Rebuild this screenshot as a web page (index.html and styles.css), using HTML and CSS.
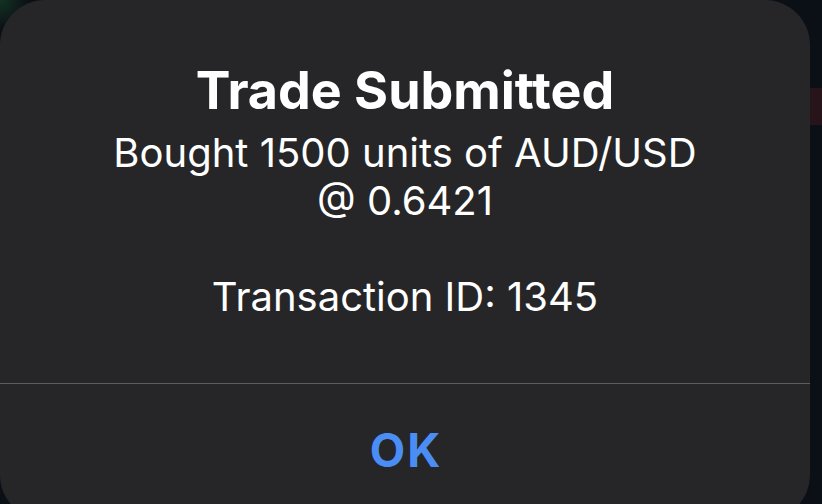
FILE: index.html
```html
<!DOCTYPE html>
<html lang="en">
<head>
    <meta charset="UTF-8">
    <meta name="viewport" content="width=device-width, initial-scale=1.0">
    <title>Trade Submitted</title>
    <link rel="stylesheet" href="styles.css">
</head>
<body>

    <div class="alert">
        <div class="alert-body">
            <h1>Trade Submitted</h1>
            <p>Bought 1500 units of AUD/USD<br>@ 0.6421<br><br>Transaction ID: 1345</p>
        </div>
        <button class="alert-btn">OK</button>
    </div>

</body>
</html>
```

FILE: styles.css
```css
body {
    margin: 0;
    width: 822px;
    height: 504px;
    overflow: hidden;
    font-family: 'Inter', 'Noto Sans', sans-serif;
    background:
        radial-gradient(circle at 0 0, #123321 0, rgba(18, 51, 33, 0) 30px),
        linear-gradient(to bottom, #0b0f16 88px, #26141a 88px, #26141a 125px, #0b0f16 125px);
}
.alert {
    width: 810px;
    height: 520px;
    background: #262628;
    border-radius: 45px;
    display: flex;
    flex-direction: column;
    color: #fff;
    text-align: center;
}
.alert-body {
    height: 384px;
    border-bottom: 1px solid #5e5e60;
    box-sizing: border-box;
    padding-top: 63px;
}
h1 {
    margin: 0;
    font-size: 52px;
    font-weight: 700;
    line-height: 56px;
}
p {
    margin: 10px 0 0;
    font-size: 40px;
    line-height: 48px;
}
.alert-btn {
    border: none;
    background: none;
    padding: 38px 0 0 2px;
    font-family: inherit;
    font-size: 46px;
    font-weight: 700;
    letter-spacing: 2px;
    color: #4a8ef5;
}
```
